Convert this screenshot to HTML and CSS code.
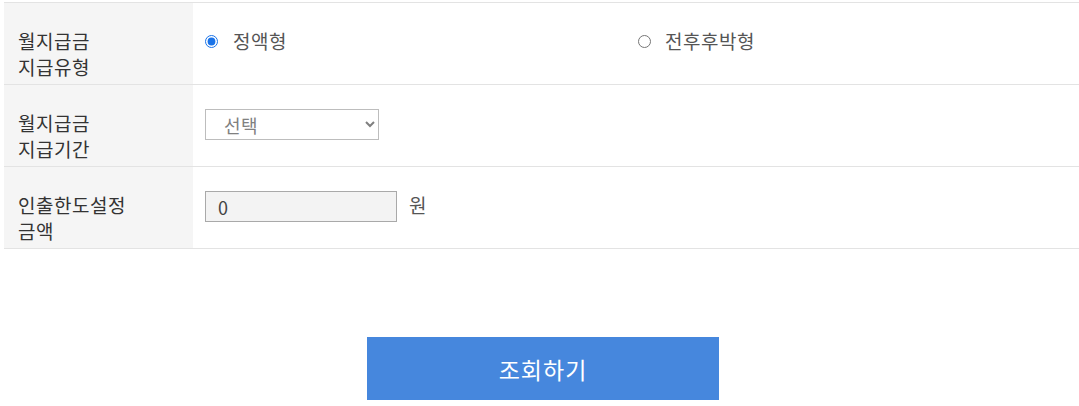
FILE: index.html
```html
<!DOCTYPE html>
<html lang="ko">
<head>
<meta charset="utf-8">
<link rel="stylesheet" href="styles.css">
</head>
<body>
<div class="wrap">
  <div class="form">
    <div class="row">
      <div class="label">월지급금<br>지급유형</div>
      <div class="field radios">
        <label class="opt"><input type="radio" name="type" checked><span>정액형</span></label>
        <label class="opt"><input type="radio" name="type"><span>전후후박형</span></label>
      </div>
    </div>
    <div class="row">
      <div class="label">월지급금<br>지급기간</div>
      <div class="field">
        <select class="sel"><option>선택</option></select>
      </div>
    </div>
    <div class="row">
      <div class="label">인출한도설정<br>금액</div>
      <div class="field amount">
        <input class="inp" type="text" value="0" readonly>
        <span class="unit">원</span>
      </div>
    </div>
  </div>
  <div class="actions">
    <button class="btn" type="button">조회하기</button>
  </div>
</div>
</body>
</html>
```

FILE: styles.css
```css
html, body {
  margin: 0;
  padding: 0;
  background: #fff;
}
body {
  font-family: "Noto Sans CJK KR", "Noto Sans", sans-serif;
  color: #333;
}
.wrap {
  margin-left: 4px;
  padding-top: 2px;
}
.form {
  border-top: 1px solid #e3e3e3;
}
.row {
  display: grid;
  grid-template-columns: 189px 1fr;
  height: 82px;
  box-sizing: border-box;
  border-bottom: 1px solid #e3e3e3;
}
.label {
  background: #f5f5f5;
  padding: 25px 14px 0;
  font-size: 19px;
  letter-spacing: 0.5px;
  line-height: 26px;
  color: #333;
}
.field {
  padding: 24px 12px 0;
  font-size: 19px;
  color: #555;
}
.radios {
  display: grid;
  grid-template-columns: 433px 1fr;
  padding-top: 25px;
}
.opt {
  display: flex;
  align-items: center;
  height: 26px;
}
.opt input {
  margin: 0 15px 0 0;
  width: 13px;
  height: 13px;
  accent-color: #1a73e8;
}
.opt:last-child input {
  margin-right: 14px;
}
.opt span {
  line-height: 26px;
  letter-spacing: 0.5px;
  color: #555;
}
.sel {
  width: 174px;
  height: 31px;
  box-sizing: border-box;
  border: 1px solid #bdbdbd;
  border-radius: 0;
  background: #fff;
  color: #808080;
  font-family: "Noto Sans CJK KR", sans-serif;
  font-size: 18px;
  letter-spacing: 0.5px;
  padding: 0 6px 0 14px;
}
.amount {
  display: flex;
  align-items: center;
  align-self: start;
  height: 31px;
  gap: 12px;
}
.inp {
  width: 192px;
  height: 31px;
  box-sizing: border-box;
  border: 1px solid #a9a9a9;
  background: #f3f3f3;
  color: #444;
  font-family: "Noto Sans CJK KR", sans-serif;
  font-size: 18px;
  padding: 0 12px;
  margin: 0;
  outline: none;
}
.unit {
  font-size: 19px;
  color: #555;
  line-height: 26px;
  margin-top: -4px;
}
.actions {
  display: flex;
  justify-content: center;
  padding-top: 88px;
}
.btn {
  width: 352px;
  height: 63px;
  border: 0;
  background: #4687dd;
  color: #fff;
  font-family: "Noto Sans CJK KR", sans-serif;
  font-size: 23px;
  letter-spacing: 1px;
  padding: 0;
  margin-left: 3px;
  cursor: pointer;
}
```
